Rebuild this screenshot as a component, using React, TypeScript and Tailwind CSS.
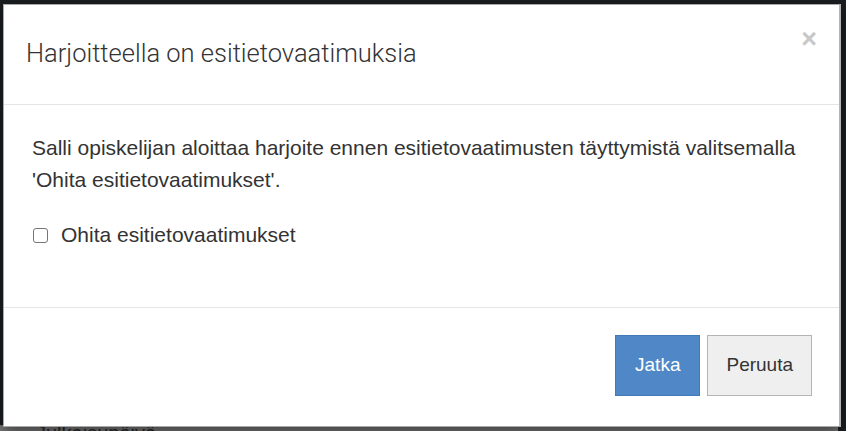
export default function App() {
  return (
    <div className="relative w-[846px] h-[431px] overflow-hidden bg-[#1b1e21]">
      {/* page behind the backdrop */}
      <div className="absolute left-0 right-[8px] bottom-0 h-[6px] overflow-hidden bg-[#7a7a7a]">
        <p className="-mt-[3px] pl-[36px] text-[20px] leading-[22px] text-[#2a2a2a] [font-family:'Liberation_Sans',Arial,sans-serif]">
          Julkaisupäivä
        </p>
      </div>

      {/* modal */}
      <div className="absolute left-[3px] top-[4px] w-[838px] h-[423px] flex flex-col bg-white border border-[#a9a9a9] border-r-2 border-r-[#b4b4b4] shadow-[0_5px_15px_rgba(0,0,0,0.5)]">
        <div className="h-[100px] shrink-0 flex items-center justify-between pl-[22px] pr-[22px] border-b border-[#e5e5e5]">
          <h4 className="pb-[3px] text-[25.5px] font-light text-[#333] [font-family:Roboto,'Noto_Sans',sans-serif]">
            Harjoitteella on esitietovaatimuksia
          </h4>
          <button className="self-start mt-[21px] text-[27px] leading-none font-bold text-[#c8c8c8] [font-family:'Liberation_Sans',Arial,sans-serif]">
            ×
          </button>
        </div>

        <div className="flex-1 px-[28px] pt-[27px] text-[21px] leading-[32px] text-[#333] [font-family:'Liberation_Sans',Arial,sans-serif]">
          <p>
            Salli opiskelijan aloittaa harjoite ennen esitietovaatimusten täyttymistä valitsemalla 'Ohita
            esitietovaatimukset'.
          </p>
          <label className="mt-[23px] flex items-center gap-[13px] pl-[1px]">
            <span className="w-[15px] h-[15px] rounded-[3px] border border-[#767676] bg-white" />
            <span>Ohita esitietovaatimukset</span>
          </label>
        </div>

        <div className="h-[119px] shrink-0 flex items-start justify-end gap-[7px] pt-[27px] pr-[27px] border-t border-[#e5e5e5] text-[19px] [font-family:'Liberation_Sans',Arial,sans-serif]">
          <button className="h-[61px] px-[19px] bg-[#5088c7] border border-[#4279b8] text-white">
            Jatka
          </button>
          <button className="h-[61px] px-[18px] bg-[#efefef] border border-[#b4b4b4] text-[#333]">
            Peruuta
          </button>
        </div>
      </div>
    </div>
  )
}
